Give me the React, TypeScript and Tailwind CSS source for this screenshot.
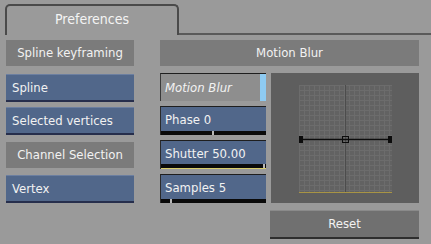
import React from "react";

const font = { fontFamily: '"DejaVu Sans Condensed", "DejaVu Sans", "Liberation Sans", sans-serif' };

function LeftButton({ label }: { label: string }) {
  return (
    <div className="h-[28px] bg-[#51678a] border-t border-[#6c7fa0] border-b-2 border-b-[#262e4c] flex items-center pl-[6px] text-[13px] text-[#f2f2f2]">
      {label}
    </div>
  );
}

function Header({ label, className = "" }: { label: string; className?: string }) {
  return (
    <div className={"h-[26px] bg-[#7b7b7b] flex items-center justify-center text-[13px] text-[#f2f2f2] " + className}>
      {label}
    </div>
  );
}

function SliderField({ label, tick, yellow }: { label: string; tick: number; yellow?: boolean }) {
  return (
    <div className="relative h-[29px] bg-[#51678a] border-t border-[#1e1e1e] border-l border-l-[#2a2a2a] text-[13px] text-[#f2f2f2] flex flex-col">
      <div className="flex-1 flex items-center pl-[4px] pt-[2px]">{label}</div>
      <div className="relative h-[4px] bg-[#0a0a0a]">
        <div className="absolute top-0 h-[4px] w-[2px] bg-[#b8b8b8]" style={{ left: tick }} />
      </div>
      {yellow ? <div className="h-[1px] bg-[#d8cc6a]" /> : null}
    </div>
  );
}

function Graph() {
  const cells = Array.from({ length: 19 });
  return (
    <div className="h-[130px] bg-[#5e5e5e] flex justify-center pt-[12px]">
      <div className="relative w-[93px] h-[108px] bg-[#626262]">
        <svg width="93" height="108" className="absolute inset-0">
          {cells.map((_, i) => (
            <line key={"v" + i} x1={i * 5 + 0.5} y1={0} x2={i * 5 + 0.5} y2={108} stroke="#6c6c6c" strokeWidth="1" />
          ))}
          {Array.from({ length: 22 }).map((_, i) => (
            <line key={"h" + i} x1={0} y1={i * 5 + 0.5} x2={93} y2={i * 5 + 0.5} stroke="#6c6c6c" strokeWidth="1" />
          ))}
          <line x1="46.5" y1="0" x2="46.5" y2="108" stroke="#4c4c4c" strokeWidth="1" />
          <line x1="0" y1="107.5" x2="93" y2="107.5" stroke="#a89444" strokeWidth="1" />
          <line x1="0" y1="54.5" x2="93" y2="54.5" stroke="#0c0c0c" strokeWidth="1.5" />
          <rect x="-3" y="51" width="7" height="7" fill="#0c0c0c" />
          <rect x="89" y="51" width="7" height="7" fill="#0c0c0c" />
          <rect x="43.5" y="51.5" width="6" height="6" fill="none" stroke="#0c0c0c" strokeWidth="1" />
        </svg>
      </div>
    </div>
  );
}

export default function App() {
  return (
    <div className="w-[431px] h-[244px] bg-[#9a9a9a] overflow-hidden" style={font}>
      <div className="flex pt-[4px] pl-[5px] h-[35px]">
        <div className="w-[174px] h-[31px] border-t-2 border-l-2 border-r-2 border-[#4a4a4a] rounded-tl-[5px] rounded-tr-[5px] flex items-center justify-center text-[14px] text-[#f4f4f4] pb-[2px]">
          Preferences
        </div>
        <div className="flex-1 border-b-2 border-[#5a5a5a]" />
      </div>
      <div className="flex pt-[5px] pl-[6px]">
        <div className="w-[128px] flex flex-col">
          <Header label="Spline keyframing" />
          <div className="mt-[8px]">
            <LeftButton label="Spline" />
          </div>
          <div className="mt-[5px]">
            <LeftButton label="Selected vertices" />
          </div>
          <Header label="Channel Selection" className="mt-[7px]" />
          <div className="mt-[7px]">
            <LeftButton label="Vertex" />
          </div>
        </div>
        <div className="w-[259px] ml-[26px] flex flex-col">
          <Header label="Motion Blur" />
          <div className="flex gap-[5px] mt-[7px]">
            <div className="w-[106px] flex flex-col gap-[5px]">
              <div className="h-[28px] bg-[#8e8e8e] border-t border-[#1e1e1e] border-l border-l-[#3a3a3a] flex items-center text-[13px] text-[#f2f2f2]">
                <span className="flex-1 pl-[4px] italic">Motion Blur</span>
                <span className="w-[6px] h-full bg-[#8ecbf2]" />
              </div>
              <SliderField label="Phase 0" tick={51} />
              <SliderField label="Shutter 50.00" tick={102} yellow />
              <SliderField label="Samples 5" tick={9} />
            </div>
            <div className="w-[148px]">
              <Graph />
            </div>
          </div>
          <div className="flex justify-end mt-[7px] pr-[0px]">
            <div className="w-[149px] h-[29px] bg-[#707070] border-t border-[#8a8a8a] border-b-2 border-b-[#2e2e2e] flex items-center justify-center text-[13px] text-[#f2f2f2]">
              Reset
            </div>
          </div>
        </div>
      </div>
    </div>
  );
}
